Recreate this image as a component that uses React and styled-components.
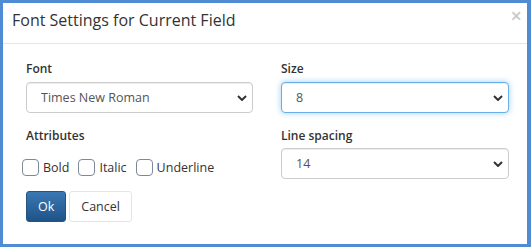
import React from "react";
import styled, { createGlobalStyle } from "styled-components";

const Global = createGlobalStyle`
  html, body { margin: 0; padding: 0; background: #fff; }
  body { font-family: "Open Sans", "Liberation Sans", sans-serif; }
  * { box-sizing: border-box; }
`;

const Modal = styled.div`
  width: 531px;
  height: 247px;
  border: solid #4f8cd4;
  border-width: 3px 4px 3px 3px;
  background: #fff;
  display: flex;
  flex-direction: column;
`;

const Header = styled.div`
  height: 41px;
  border-bottom: 1px solid #e5e5e5;
  display: flex;
  align-items: flex-start;
  justify-content: space-between;
  padding: 0 5px 0 9px;
`;

const Title = styled.h4`
  margin: 7px 0 0;
  font-size: 16px;
  font-weight: 400;
  color: #333;
  line-height: 20px;
`;

const Close = styled.span`
  font-size: 20px;
  color: #c9c9c9;
  font-weight: 600;
  line-height: 1;
  margin-top: 3px;
`;

const Body = styled.div`
  padding: 16px 18px 0 23px;
  display: grid;
  grid-template-columns: 227px 228px;
  column-gap: 28px;
  row-gap: 14px;
`;

const Field = styled.div`
  display: flex;
  flex-direction: column;
`;

const Label = styled.label`
  font-size: 12px;
  font-weight: 600;
  color: #333;
  line-height: 18px;
  margin-bottom: ${(p) => p.$gap || 4}px;
`;

const SelectWrap = styled.div`
  position: relative;
  height: 31px;
`;

const Select = styled.select`
  appearance: none;
  -webkit-appearance: none;
  width: 100%;
  height: 100%;
  padding: 0 30px 0 14px;
  font-family: "Open Sans", "Liberation Sans", sans-serif;
  font-size: 12.5px;
  color: #555;
  background: #fff;
  border: 1px solid ${(p) => (p.$focus ? "#66afe9" : "#ccc")};
  border-radius: 4px;
  box-shadow: ${(p) =>
    p.$focus
      ? "inset 0 1px 1px rgba(0,0,0,.075), 0 0 6px rgba(102,175,233,.6)"
      : "inset 0 1px 1px rgba(0,0,0,.075)"};
  outline: none;
`;

const Chevron = styled.svg`
  position: absolute;
  right: 6px;
  top: 50%;
  margin-top: -3px;
  pointer-events: none;
`;

const Checks = styled.div`
  display: flex;
  align-items: center;
  margin-left: -4px;
`;

const CheckLabel = styled.label`
  display: flex;
  align-items: center;
  font-size: 12.5px;
  color: #333;
  margin-right: 9px;
`;

const Box = styled.span`
  width: 17px;
  height: 17px;
  border: 1px solid #7d8898;
  border-radius: 4px;
  margin-right: 4px;
  background: #fff;
`;

const Buttons = styled.div`
  display: flex;
  gap: 3px;
  padding: 12px 0 0 23px;
`;

const Button = styled.button`
  height: 31px;
  padding: 0 11px;
  font-family: "Open Sans", "Liberation Sans", sans-serif;
  font-size: 12.5px;
  border-radius: 3px;
  border: 1px solid ${(p) => (p.$primary ? "#245580" : "#e4e4e4")};
  color: ${(p) => (p.$primary ? "#fff" : "#333")};
  background: ${(p) =>
    p.$primary ? "linear-gradient(#3a78b4, #1f5387)" : "#fff"};
`;

const Chev = () => (
  <Chevron width="10" height="6" viewBox="0 0 10 6">
    <path d="M1 1 L5 5 L9 1" fill="none" stroke="#333" strokeWidth="2" />
  </Chevron>
);

export default function App() {
  return (
    <>
      <Global />
      <Modal>
        <Header>
          <Title>Font Settings for Current Field</Title>
          <Close>×</Close>
        </Header>
        <Body>
          <Field>
            <Label>Font</Label>
            <SelectWrap>
              <Select defaultValue="Times New Roman">
                <option>Times New Roman</option>
              </Select>
              <Chev />
            </SelectWrap>
          </Field>
          <Field>
            <Label>Size</Label>
            <SelectWrap>
              <Select $focus defaultValue="8">
                <option>8</option>
              </Select>
              <Chev />
            </SelectWrap>
          </Field>
          <Field>
            <Label $gap={14}>Attributes</Label>
            <Checks>
              <CheckLabel>
                <Box />
                Bold
              </CheckLabel>
              <CheckLabel>
                <Box />
                Italic
              </CheckLabel>
              <CheckLabel>
                <Box />
                Underline
              </CheckLabel>
            </Checks>
          </Field>
          <Field>
            <Label $gap={3}>Line spacing</Label>
            <SelectWrap>
              <Select defaultValue="14">
                <option>14</option>
              </Select>
              <Chev />
            </SelectWrap>
          </Field>
        </Body>
        <Buttons>
          <Button $primary>Ok</Button>
          <Button>Cancel</Button>
        </Buttons>
      </Modal>
    </>
  );
}
